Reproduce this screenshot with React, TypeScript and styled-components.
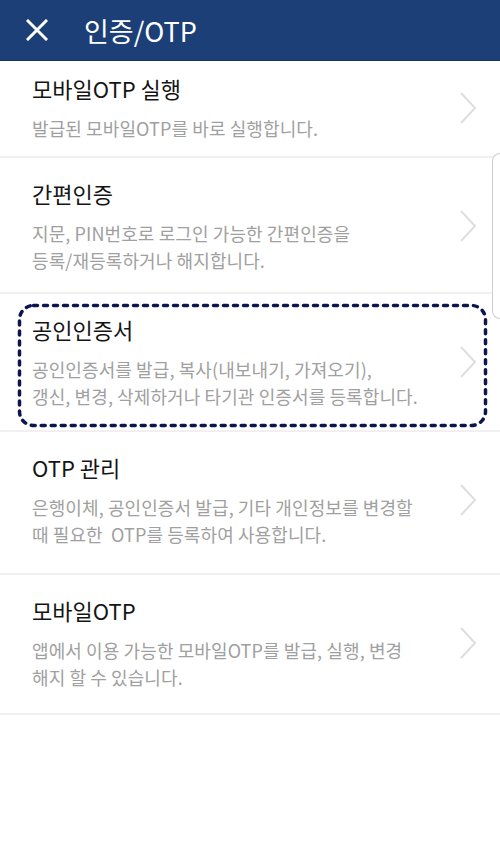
import React from 'react'
import styled, { createGlobalStyle } from 'styled-components'

const GlobalStyle = createGlobalStyle`
    body {
        margin: 0;
        background: #fff;
        font-family: "Noto Sans CJK KR", "Noto Sans", sans-serif;
    }
`

const Page = styled.div`
    position: relative;
    width: 500px;
    min-height: 850px;
    background: #fff;
`

const Header = styled.header`
    height: 60px;
    background-color: #1b3f76;
    border-bottom: 1px solid #163463;
    display: flex;
    align-items: center;
    padding: 0 0 0 26px;
`

const CloseButton = styled.button`
    background: none;
    border: none;
    padding: 0;
    width: 22px;
    height: 22px;
    display: flex;
    cursor: pointer;
`

const Title = styled.h1`
    margin: 0 0 0 36px;
    color: #fff;
    font-size: 27px;
    font-weight: 400;
    line-height: 1;
`

const List = styled.ul`
    list-style: none;
    margin: 0;
    padding: 0;
`

const Item = styled.li<{ $first?: boolean; $bottom: number }>`
    position: relative;
    display: flex;
    align-items: center;
    padding: ${({ $first, $bottom }) => ($first ? '12px 22px 14px 32px' : `20px 22px ${$bottom}px 32px`)};
    border-bottom: 2px solid #f0f0f0;
`

const TextBlock = styled.div`
    flex: 1;
`

const ItemTitle = styled.div`
    color: #141414;
    font-size: 22px;
    line-height: 30px;
`

const Desc = styled.div`
    margin-top: 12px;
    color: #a0a0a0;
    font-size: 18px;
    line-height: 27px;
    letter-spacing: 0.1px;
    white-space: pre;
`

const Chevron = styled.svg`
    width: 20px;
    height: 34px;
    flex-shrink: 0;
`

const FocusRing = styled.svg`
    position: absolute;
    top: 10px;
    left: 18px;
    width: calc(100% - 31px);
    height: calc(100% - 13px);
    overflow: visible;
    pointer-events: none;
`

const ScrollThumb = styled.div`
    position: absolute;
    top: 153px;
    right: 0;
    width: 7px;
    height: 164px;
    background: #fff;
    border: 1.5px solid #cfcfcf;
    border-right: none;
    border-radius: 8px 0 0 8px;
`

type MenuItem = {
    title: string
    lines: string[]
    bottom?: number
}

const items: MenuItem[] = [
    { title: '모바일OTP 실행', lines: ['발급된 모바일OTP를 바로 실행합니다.'] },
    {
        title: '간편인증',
        lines: ['지문, PIN번호로 로그인 가능한 간편인증을', '등록/재등록하거나 해지합니다.'],
        bottom: 18,
    },
    {
        title: '공인인증서',
        lines: ['공인인증서를 발급, 복사(내보내기, 가져오기),', '갱신, 변경, 삭제하거나 타기관 인증서를 등록합니다.'],
    },
    {
        title: 'OTP 관리',
        lines: ['은행이체, 공인인증서 발급, 기타 개인정보를 변경할', '때 필요한  OTP를 등록하여 사용합니다.'],
        bottom: 25,
    },
    {
        title: '모바일OTP',
        lines: ['앱에서 이용 가능한 모바일OTP를 발급, 실행, 변경', '해지 할 수 있습니다.'],
        bottom: 22,
    },
]

const App: React.FC = () => {
    return (
        <Page>
            <GlobalStyle />
            <Header>
                <CloseButton aria-label="닫기">
                    <svg width="22" height="22" viewBox="0 0 22 22">
                        <path d="M2 2 L20 20 M20 2 L2 20" stroke="#fff" strokeWidth="3" strokeLinecap="square" />
                    </svg>
                </CloseButton>
                <Title>인증/OTP</Title>
            </Header>
            <List>
                {items.map((item, i) => (
                    <Item key={item.title} $first={i === 0} $bottom={item.bottom ?? 20}>
                        <TextBlock>
                            <ItemTitle>{item.title}</ItemTitle>
                            <Desc>{item.lines.join('\n')}</Desc>
                        </TextBlock>
                        <Chevron viewBox="0 0 20 34">
                            <polyline points="3,2 17,17 3,32" fill="none" stroke="#dedede" strokeWidth="2" />
                        </Chevron>
                        {i === 2 && (
                            <FocusRing>
                                <rect
                                    x="1.5"
                                    y="1.5"
                                    width="calc(100% - 3px)"
                                    height="calc(100% - 3px)"
                                    rx="14"
                                    fill="none"
                                    stroke="#0c1550"
                                    strokeWidth="3.5"
                                    strokeDasharray="4 6"
                                    strokeLinecap="round"
                                />
                            </FocusRing>
                        )}
                    </Item>
                ))}
            </List>
            <ScrollThumb />
        </Page>
    )
}

export default App
